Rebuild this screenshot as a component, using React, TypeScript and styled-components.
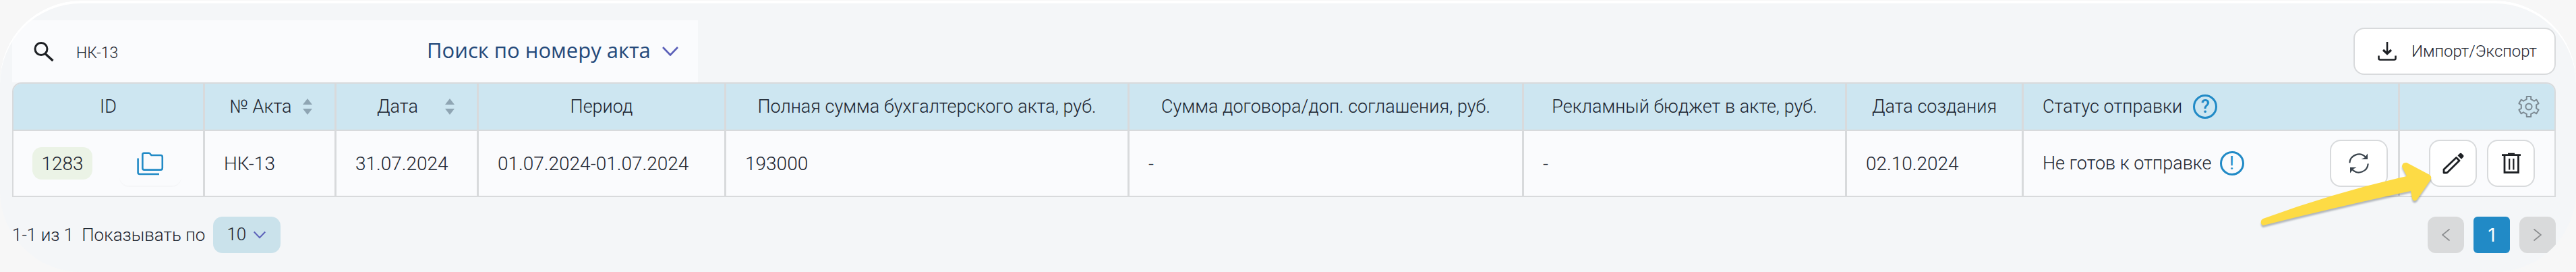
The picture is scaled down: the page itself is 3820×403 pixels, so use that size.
import React from 'react';
import styled, { createGlobalStyle } from 'styled-components';

const colors = {
  page: '#f7f7f7',
  panel: '#f4f6f8',
  surface: '#fafbfd',
  head: '#cde6f1',
  line: '#d8dadc',
  text: '#1c2530',
  blue: '#218ac6',
  accent: '#5a5fb8',
};

const GlobalStyle = createGlobalStyle`
  * { box-sizing: border-box; }
  body {
    margin: 0;
    padding-top: 1px;
    background: ${colors.page};
    color: ${colors.text};
    font-family: Roboto, "Liberation Sans", sans-serif;
    font-size: 27px;
    font-weight: 300;
  }
  button, input, select { font: inherit; color: inherit; }
  svg { display: block; flex: none; }
`;

const Panel = styled.main`
  position: relative;
  padding: 29px 30px 28px 18px;
  border-radius: 120px;
  overflow: hidden;
  background: ${colors.panel};

  &::after {
    content: '';
    position: absolute;
    inset: 0;
    border-radius: 120px;
    box-shadow: inset 0 4px 0 #fff;
    pointer-events: none;
  }
`;

const Toolbar = styled.div`
  display: flex;
  align-items: center;
  justify-content: space-between;
`;

const SearchBox = styled.form`
  display: flex;
  align-items: center;
  width: 1017px;
  height: 92px;
  padding: 0 29px 0 32px;
  background: ${colors.surface};
`;

const SearchInput = styled.input`
  flex: 1;
  min-width: 0;
  margin: 4px 0 0 33px;
  padding: 0;
  border: 0;
  outline: 0;
  background: none;
  font-size: 23px;
`;

const SelectWrap = styled.span`
  display: inline-grid;
  align-items: center;

  & > * { grid-area: 1 / 1; }
  & > svg { justify-self: end; pointer-events: none; }
`;

const FieldSelect = styled.select`
  appearance: none;
  padding: 0 41px 4px 0;
  border: 0;
  background: none;
  color: #24497a;
  font-family: "Open Sans", "Noto Sans", sans-serif;
  font-size: 31px;
  font-weight: 400;
`;

const SizeSelect = styled.select`
  appearance: none;
  width: 100px;
  height: 54px;
  padding: 0 40px 2px 20px;
  border: 0;
  border-radius: 14px;
  background: #cae2eb;
`;

const SizeWrap = styled(SelectWrap)`
  & > svg { margin-right: 22px; }
`;

const OutlineButton = styled.button<{ $width?: number }>`
  display: flex;
  align-items: center;
  justify-content: center;
  width: ${(p) => (p.$width ? `${p.$width}px` : 'auto')};
  height: 70px;
  padding: 0;
  border: 2px solid ${colors.line};
  border-radius: 16px;
  background: #fff;
`;

const ExportButton = styled(OutlineButton)`
  gap: 22px;
  padding: 0 26px 0 34px;
  font-size: 24px;
`;

const TableFrame = styled.div`
  border: 2px solid ${colors.line};
  border-radius: 14px 14px 0 0;
  overflow: hidden;
`;

const Table = styled.table`
  width: 100%;
  table-layout: fixed;
  border-spacing: 0;
`;

const HeadCell = styled.th<{ $align?: string }>`
  height: 70px;
  padding: 0 28px;
  border-bottom: 2px solid ${colors.line};
  background: ${colors.head};
  font-weight: 300;
  text-align: ${(p) => p.$align || 'center'};
  white-space: nowrap;

  & + & { border-left: 3px solid ${colors.line}; }
`;

const Cell = styled.td<{ $numeric?: boolean }>`
  height: 96px;
  padding: 0 28px;
  background: ${colors.surface};
  font-size: ${(p) => (p.$numeric ? 28 : 27)}px;
  white-space: nowrap;

  & + & { border-left: 3px solid ${colors.line}; }
`;

const StatusCell = styled(Cell)`
  padding-right: 15px;
`;

const SortHead = styled.div`
  display: flex;
  align-items: center;
  margin: 0 5px 0 -8px;

  & > span { flex: 1; }
`;

const Inline = styled.div`
  display: flex;
  align-items: center;
  gap: 16px;
`;

const IdGroup = styled(Inline)`
  gap: 40px;
`;

const StatusGroup = styled(Inline)`
  gap: 12px;
`;

const Actions = styled.div`
  display: flex;
  gap: 15px;
  padding-left: 15px;
`;

const Spacer = styled.span`
  flex: 1;
`;

const IdBadge = styled.span`
  display: flex;
  align-items: center;
  justify-content: center;
  width: 89px;
  height: 48px;
  border-radius: 14px;
  background: #ebf3e6;
`;

const FolderButton = styled.button`
  display: flex;
  align-items: center;
  justify-content: center;
  width: 92px;
  height: 66px;
  padding: 0;
  border: 0;
  border-radius: 14px;
  background: none;
  box-shadow: 0 2px 0 rgba(0, 0, 0, 0.02);
`;

const RingButton = styled.button<{ $light?: boolean }>`
  display: flex;
  align-items: center;
  justify-content: center;
  width: 36px;
  height: 36px;
  padding: 0;
  border: 3px solid ${colors.blue};
  border-radius: 50%;
  background: none;
  color: ${colors.blue};
  font-size: 27px;
  font-weight: ${(p) => (p.$light ? 400 : 500)};
  line-height: 30px;
`;

const IconButton = styled.button`
  display: block;
  margin: 0 -6px 0 auto;
  padding: 0;
  border: 0;
  background: none;
`;

const Footer = styled.footer`
  display: flex;
  align-items: center;
  justify-content: space-between;
  margin-top: 29px;
`;

const PageSize = styled.label`
  display: flex;
  align-items: center;
  gap: 12px;
  font-size: 26px;
`;

const Pager = styled.nav`
  display: flex;
  gap: 14px;
`;

const PageButton = styled.button<{ $current?: boolean }>`
  display: flex;
  align-items: center;
  justify-content: center;
  width: 54px;
  height: 54px;
  padding: 0;
  border: 0;
  border-radius: ${(p) => (p.$current ? 6 : 12)}px;
  background: ${(p) => (p.$current ? colors.blue : '#d9dadb')};
  color: ${(p) => (p.$current ? '#fff' : '#8b8d8f')};
  font-family: Inter, sans-serif;
  font-weight: 400;
`;

const Pointer = styled.svg`
  position: absolute;
  top: 235px;
  right: 210px;
  z-index: 1;
  pointer-events: none;
  filter: drop-shadow(0 3px 1px rgba(80, 90, 100, 0.4));
`;

const SearchIcon = () => (
  <svg width="30" height="29" viewBox="0 0 30 29" fill="none" stroke="#1d2024" strokeWidth="3">
    <circle cx="11" cy="10.5" r="9" />
    <path d="M17 17.5L28.5 28" strokeWidth="3.4" />
  </svg>
);

const Chevron = ({ width, height }: { width: number; height: number }) => (
  <svg width={width} height={height} viewBox="0 0 24 14" fill="none" stroke={colors.accent} strokeWidth="2.6">
    <path d="M1 1L12 12.5L23 1" />
  </svg>
);

const DownloadIcon = () => (
  <svg width="28" height="30" viewBox="0 0 28 30" fill="none" stroke="#1d2024" strokeWidth="2.6">
    <path d="M14 1V18" />
    <path d="M8 13L14 18.5L20 13" strokeWidth="3.2" />
    <path d="M1.5 21.5V25.5Q1.5 27.5 3.5 27.5H24.5Q26.5 27.5 26.5 25.5V21.5" />
  </svg>
);

const SortIcon = () => (
  <svg width="14" height="24" viewBox="0 0 14 24" fill="#8fa5b3">
    <path d="M7 0L14 9H0Z" />
    <path d="M0 15H14L7 24Z" />
  </svg>
);

const FolderIcon = () => (
  <svg width="40" height="35" viewBox="0 0 40 35" fill="none" stroke={colors.blue} strokeWidth="2.6" strokeLinejoin="round">
    <path d="M1.6 9.5V30.5Q1.6 33 4.2 33H33" />
    <path d="M10.6 1.8H17.6Q19 1.8 20 3.2L21.4 5H35.2Q37.8 5 37.8 7.4V24Q37.8 26.6 35.2 26.6H10.8Q8.4 26.6 8.4 24V4Q8.4 1.8 10.6 1.8Z" />
  </svg>
);

const RefreshIcon = () => (
  <svg width="30" height="30" viewBox="0 0 30 30" fill="none" stroke="#3a444d" strokeWidth="2.2">
    <path d="M1.3 14.3A13.7 13.7 0 0 1 25 6" />
    <path d="M28.7 15.5A13.7 13.7 0 0 1 5 24" />
    <path d="M28 0.5V9H18.5L23.5 6.5Z" fill="#3a444d" stroke="none" />
    <path d="M2 29.5V21H11.5L6.5 23.5Z" fill="#3a444d" stroke="none" />
  </svg>
);

const PencilIcon = () => (
  <svg width="32" height="32" viewBox="0 0 32 32" fill="none" stroke="#1d2024" strokeWidth="2.8" strokeLinejoin="round">
    <path d="M2 30V25L20.5 7.5L25 12L7.5 29.2Q6.7 30 5.5 30Z" />
    <path d="M23.5 4.5L26 2Q27 1 28 2L30.2 4.2Q31.2 5.2 30.2 6.2L28 8.6Z" fill="#1d2024" strokeWidth="1.6" />
  </svg>
);

const TrashIcon = () => (
  <svg width="28" height="32" viewBox="0 0 28 32" fill="none" stroke="#1d2024" strokeWidth="2.8">
    <path d="M0 3.6H28" />
    <path d="M9 1.8H19" strokeWidth="2" />
    <path d="M4 4V29.5H24.5V4" />
    <path d="M11.2 9V25.5M17.4 9V25.5" strokeWidth="2.2" />
  </svg>
);

// Six-toothed cog: every tooth is four corners around its own axis.
const gearPoints = Array.from({ length: 6 }, (_, tooth) => {
  const angle = (tooth * Math.PI) / 3;
  const corners = [[-4.4, -10.4], [-3.2, -11], [-3.2, -15], [3.2, -15], [3.2, -11], [4.4, -10.4]];
  return corners
    .map(([x, y]) => {
      const px = 16 + x * Math.cos(angle) - y * Math.sin(angle);
      const py = 16 + x * Math.sin(angle) + y * Math.cos(angle);
      return `${px.toFixed(1)},${py.toFixed(1)}`;
    })
    .join(' ');
}).join(' ');

const GearIcon = () => (
  <svg width="32" height="32" viewBox="0 0 32 32" fill="none" stroke="#7c8992" strokeWidth="2" strokeLinejoin="round">
    <polygon points={gearPoints} />
    <circle cx="16" cy="16" r="4.6" />
  </svg>
);

const PagerArrow = ({ flip }: { flip?: boolean }) => (
  <svg width="12" height="18" viewBox="0 0 12 18" fill="none" stroke="currentColor" strokeWidth="1.8">
    <path d={flip ? 'M0.5 0.5L11 9L0.5 17.5' : 'M11.5 0.5L1 9L11.5 17.5'} />
  </svg>
);

const columns = [281, 195, 211, 367, undefined, 585, 479, 262, 558, 232];

export default function App() {
  return (
    <>
      <GlobalStyle />
      <Panel>
        <Toolbar>
          <SearchBox>
            <SearchIcon />
            <SearchInput type="text" aria-label="Поиск" defaultValue="НК-13" />
            <SelectWrap>
              <FieldSelect aria-label="Поле поиска">
                <option>Поиск по номеру акта</option>
              </FieldSelect>
              <Chevron width={24} height={14} />
            </SelectWrap>
          </SearchBox>
          <ExportButton type="button">
            <DownloadIcon />
            Импорт/Экспорт
          </ExportButton>
        </Toolbar>

        <TableFrame>
          <Table>
            <colgroup>
              {columns.map((width, i) => (
                <col key={i} width={width} />
              ))}
            </colgroup>
            <thead>
              <tr>
                <HeadCell>ID</HeadCell>
                <HeadCell>
                  <SortHead><span>№ Акта</span><SortIcon /></SortHead>
                </HeadCell>
                <HeadCell>
                  <SortHead><span>Дата</span><SortIcon /></SortHead>
                </HeadCell>
                <HeadCell>Период</HeadCell>
                <HeadCell>Полная сумма бухгалтерского акта, руб.</HeadCell>
                <HeadCell>Сумма договора/доп. соглашения, руб.</HeadCell>
                <HeadCell>Рекламный бюджет в акте, руб.</HeadCell>
                <HeadCell>Дата создания</HeadCell>
                <HeadCell $align="left">
                  <Inline>
                    Статус отправки
                    <RingButton type="button">?</RingButton>
                  </Inline>
                </HeadCell>
                <HeadCell>
                  <IconButton type="button" aria-label="Настройки"><GearIcon /></IconButton>
                </HeadCell>
              </tr>
            </thead>
            <tbody>
              <tr>
                <Cell $numeric>
                  <IdGroup>
                    <IdBadge>1283</IdBadge>
                    <FolderButton type="button" aria-label="Папка"><FolderIcon /></FolderButton>
                  </IdGroup>
                </Cell>
                <Cell $numeric>НК-13</Cell>
                <Cell $numeric>31.07.2024</Cell>
                <Cell $numeric>01.07.2024-01.07.2024</Cell>
                <Cell $numeric>193000</Cell>
                <Cell $numeric>-</Cell>
                <Cell $numeric>-</Cell>
                <Cell $numeric>02.10.2024</Cell>
                <StatusCell>
                  <StatusGroup>
                    Не готов к отправке
                    <RingButton type="button" $light>!</RingButton>
                    <Spacer />
                    <OutlineButton type="button" $width={86} aria-label="Обновить"><RefreshIcon /></OutlineButton>
                  </StatusGroup>
                </StatusCell>
                <Cell>
                  <Actions>
                    <OutlineButton type="button" $width={71} aria-label="Редактировать"><PencilIcon /></OutlineButton>
                    <OutlineButton type="button" $width={71} aria-label="Удалить"><TrashIcon /></OutlineButton>
                  </Actions>
                </Cell>
              </tr>
            </tbody>
          </Table>
        </TableFrame>

        <Footer>
          <PageSize>
            <span>1-1 из 1</span>
            <span>Показывать по</span>
            <SizeWrap>
              <SizeSelect>
                <option>10</option>
              </SizeSelect>
              <Chevron width={18} height={12} />
            </SizeWrap>
          </PageSize>
          <Pager>
            <PageButton type="button" aria-label="Назад"><PagerArrow /></PageButton>
            <PageButton type="button" $current>1</PageButton>
            <PageButton type="button" aria-label="Вперёд"><PagerArrow flip /></PageButton>
          </Pager>
        </Footer>

        <Pointer width="260" height="104" viewBox="0 0 260 104" fill="#fddb45">
          <path d="M3 95Q2 90 6 88Q110 50 219 25L212 11Q212 4 219 5L253 23Q257 26 254 31L234 60Q229 64 227 58L225 47Q110 72 6 98Q4 98 3 95Z" />
        </Pointer>
      </Panel>
    </>
  );
}
